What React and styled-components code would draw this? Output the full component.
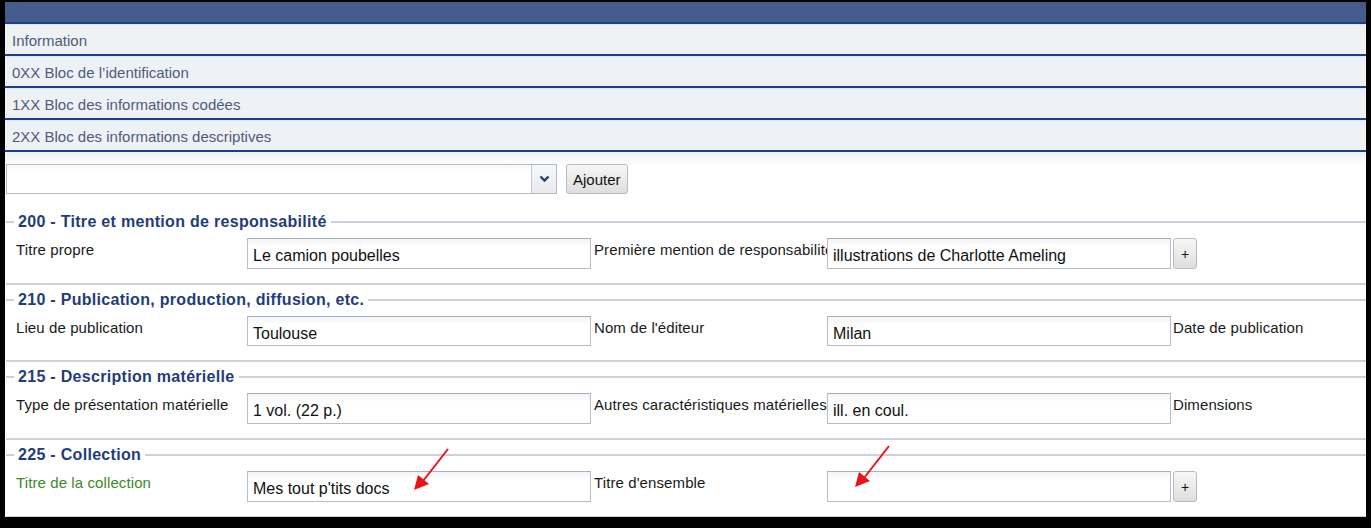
import React from "react";
import styled, { createGlobalStyle } from "styled-components";

const Global = createGlobalStyle`
  html, body { margin: 0; padding: 0; background: #000; }
  body { font-family: "Liberation Sans", Arial, sans-serif; }
  * { box-sizing: border-box; }
`;

const Frame = styled.div`
  width: 1371px;
  height: 528px;
  background: #000;
  padding: 2px 5px 0 5px;
  overflow: hidden;
`;

const Page = styled.div`
  position: relative;
  height: 515px;
  background: #fff;
  overflow: hidden;
`;

const TopBar = styled.div`
  height: 22px;
  background: #455c8b;
  border-bottom: 2px solid #1b3f8b;
`;

const AccordionRow = styled.div`
  height: 32px;
  display: flex;
  align-items: center;
  padding: 1px 0 0 7px;
  background: #eef2f4;
  border-top: 1px solid #dfe8f2;
  border-bottom: 2px solid #1b3f8b;
  color: #4d5c7b;
  font-size: 15px;
`;

const Form = styled.div`
  background: linear-gradient(#edf0f2, #ffffff 14px);
  padding: 12px 0 0 1px;
`;

const Toolbar = styled.div`
  display: flex;
  align-items: center;
  gap: 9px;
`;

const Select = styled.div`
  width: 551px;
  height: 30px;
  display: flex;
  border: 1px solid #b3b9c6;
  background: linear-gradient(#f6f7f8, #ffffff 8px);
`;

const SelectValue = styled.div`
  flex: 1;
`;

const SelectArrow = styled.div`
  width: 25px;
  border-left: 1px solid #c3c8d2;
  background: linear-gradient(#f8f8f8, #e8eaee);
  display: flex;
  align-items: center;
  justify-content: center;
`;

const Button = styled.button`
  height: ${(p) => p.$h || 30}px;
  padding: 0 ${(p) => p.$px ?? 5}px;
  min-width: ${(p) => p.$w || 0}px;
  border: 1px solid #b8bbc0;
  border-radius: 3px;
  background: linear-gradient(#f7f7f7, #dedede);
  font-family: "Liberation Sans", Arial, sans-serif;
  font-size: ${(p) => p.$fs || 15}px;
  color: #111;
  display: flex;
  align-items: center;
  justify-content: center;
`;

const Section = styled.div`
  margin-top: ${(p) => p.$mt ?? 6}px;
  border-bottom: 2px solid #cdd0db;
  padding-bottom: 14px;
`;

const Legend = styled.div`
  display: flex;
  align-items: center;
  height: 18px;
  color: #1f3d7a;
  font-weight: bold;
  font-size: 16px;
  letter-spacing: 0.3px;
  &::before {
    content: "";
    width: 8px;
    height: 2px;
    background: #cdd0db;
    margin-right: 4px;
  }
  &::after {
    content: "";
    flex: 1;
    height: 2px;
    background: #cdd0db;
    margin-left: 4px;
  }
`;

const FieldRow = styled.div`
  display: grid;
  grid-template-columns: 231px 344px 236px 344px auto;
  align-items: start;
  padding: 7px 0 0 10px;
`;

const Label = styled.div`
  font-size: 15px;
  letter-spacing: 0.1px;
  color: ${(p) => (p.$green ? "#3b8a26" : "#1a1a1a")};
  padding: 3px 0 0 ${(p) => p.$pl || 0}px;
  white-space: nowrap;
  overflow: hidden;
`;

const Input = styled.div`
  height: ${(p) => p.$h || 31}px;
  border: 1px solid #b9bdc9;
  border-top-color: #a9aebb;
  background: linear-gradient(#f3f4f6, #ffffff 8px);
  font-size: 16px;
  color: #111;
  padding: 8px 0 0 5px;
  white-space: nowrap;
  overflow: hidden;
`;

const Extra = styled.div`
  padding-left: 2px;
  display: flex;
`;

const Arrows = styled.svg`
  position: absolute;
  left: 0;
  top: 0;
  pointer-events: none;
`;

const Chevron = () => (
  <svg width="11" height="8" viewBox="0 0 11 8">
    <path d="M1.5 1.5 L5.5 5.5 L9.5 1.5" stroke="#23406f" strokeWidth="2.4" fill="none" />
  </svg>
);

const sections = [
  {
    title: "200 - Titre et mention de responsabilité",
    l1: "Titre propre",
    v1: "Le camion poubelles",
    l2: "Première mention de responsabilité",
    v2: "illustrations de Charlotte Ameling",
    plus: true,
  },
  {
    title: "210 - Publication, production, diffusion, etc.",
    l1: "Lieu de publication",
    v1: "Toulouse",
    l2: "Nom de l'éditeur",
    v2: "Milan",
    l3: "Date de publication",
    h: 30,
  },
  {
    title: "215 - Description matérielle",
    l1: "Type de présentation matérielle",
    v1: "1 vol. (22 p.)",
    l2: "Autres caractéristiques matérielles",
    v2: "ill. en coul.",
    l3: "Dimensions",
  },
  {
    title: "225 - Collection",
    l1: "Titre de la collection",
    green: true,
    v1: "Mes tout p'tits docs",
    l2: "Titre d'ensemble",
    v2: "",
    plus: true,
  },
];

export default function App() {
  return (
    <>
      <Global />
      <Frame>
        <Page>
          <TopBar />
          <AccordionRow>Information</AccordionRow>
          <AccordionRow>0XX Bloc de l’identification</AccordionRow>
          <AccordionRow>1XX Bloc des informations codées</AccordionRow>
          <AccordionRow>2XX Bloc des informations descriptives</AccordionRow>
          <Form>
            <Toolbar>
              <Select>
                <SelectValue />
                <SelectArrow>
                  <Chevron />
                </SelectArrow>
              </Select>
              <Button $px={6}>Ajouter</Button>
            </Toolbar>
            {sections.map((s, i) => (
              <Section key={i} $mt={i === 0 ? 19 : 6}>
                <Legend>{s.title}</Legend>
                <FieldRow>
                  <Label $green={s.green}>{s.l1}</Label>
                  <Input $h={s.h}>{s.v1}</Input>
                  <Label $pl={3}>{s.l2}</Label>
                  <Input $h={s.h}>{s.v2}</Input>
                  <Extra>
                    {s.plus ? (
                      <Button $px={0} $w={24} $h={31} $fs={14}>+</Button>
                    ) : (
                      <Label>{s.l3}</Label>
                    )}
                  </Extra>
                </FieldRow>
              </Section>
            ))}
          </Form>
          <Arrows width="1361" height="515" viewBox="0 0 1361 515">
            <g stroke="#e8141b" strokeWidth="2" fill="#e8141b">
              <line x1="443" y1="447" x2="418" y2="479" />
              <polygon points="409,488 413,473 424,482" stroke="none" />
              <line x1="884" y1="444" x2="859" y2="476" />
              <polygon points="850,485 854,470 865,479" stroke="none" />
            </g>
          </Arrows>
        </Page>
      </Frame>
    </>
  );
}
